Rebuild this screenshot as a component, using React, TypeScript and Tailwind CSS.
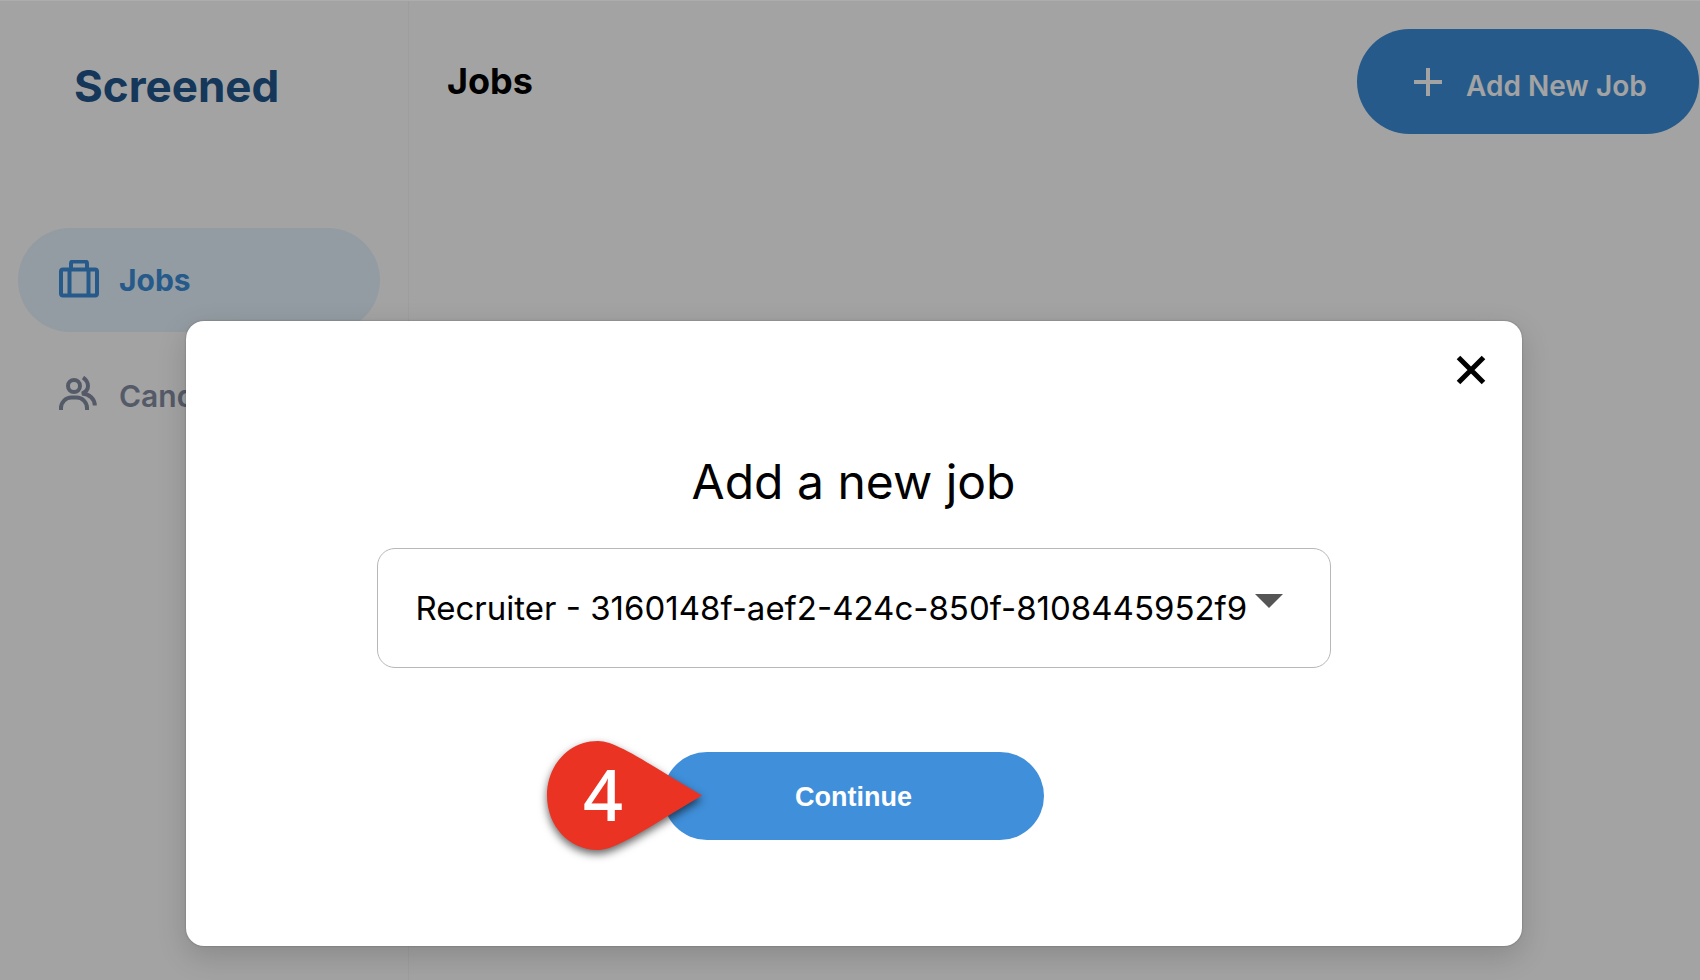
import { useState } from 'react';

const NAV_ITEMS = [
  { label: 'Jobs', icon: <BriefcaseIcon />, active: true },
  { label: 'Candidates', icon: <UsersIcon />, active: false },
];

const JOBS = ['Recruiter - 3160148f-aef2-424c-850f-8108445952f9'];

function BriefcaseIcon() {
  return (
    <svg width="40" height="40" viewBox="0 0 40 40" fill="none" stroke="currentColor" strokeWidth="4" aria-hidden="true">
      <rect x="2" y="9.5" width="36" height="26" rx="2" />
      <path d="M12 9.500V3.500a2 2 0 0 1 2-2h12a2 2 0 0 1 2 2v6M10.500 9.500v26M29.500 9.500v26" />
    </svg>
  );
}

function UsersIcon() {
  return (
    <svg width="40" height="40" viewBox="0 0 40 40" fill="none" stroke="currentColor" strokeWidth="4" aria-hidden="true">
      <circle cx="15" cy="10" r="6" />
      <path d="M2 34v-2a10.500 10.500 0 0 1 10.500-10.500h5A10.500 10.500 0 0 1 28 32v2" />
      <path d="M24 1.500c3 2 5 5 5 8.500s-2 6-6 7.500c7.500.5 12.800 5.500 12.800 12" />
    </svg>
  );
}

export default function App() {
  const [job, setJob] = useState(JOBS[0]);

  return (
    <div className="relative flex min-h-screen overflow-hidden bg-white font-['Inter',sans-serif] text-black">
      {/* Sidebar */}
      <aside className="w-[409px] shrink-0 border-r border-[#f8f8f8] px-[18px] pt-[56px]">
        <a href="#" className="block pl-[56px] text-[44px] leading-[60px] font-bold text-[#21568e]">Screened</a>
        <nav className="mt-[112px] w-[362px] space-y-3">
          {NAV_ITEMS.map(item => (
            <a
              key={item.label}
              href="#"
              className={`flex h-[104px] items-center gap-5 rounded-full pl-[41px] text-[30px] ${item.active ? 'bg-[#e7f5fd] font-bold text-[#3a8ed9]' : 'font-semibold text-[#858ea3]'}`}
            >
              {item.icon}
              {item.label}
            </a>
          ))}
        </nav>
      </aside>

      {/* Header */}
      <main className="flex-1">
        <header className="flex items-start justify-between pt-[29px] pl-[38px]">
          <h1 className="pt-[28px] text-[36px] leading-[48px] font-bold">Jobs</h1>
          <button className="mr-px flex h-[105px] w-[342px] items-center gap-6 rounded-full bg-[#3a8ed9] pl-[57px] text-[28px] font-semibold whitespace-nowrap text-white">
            <svg width="28" height="28" viewBox="0 0 28 28" stroke="currentColor" strokeWidth="4" aria-hidden="true">
              <path d="M14 0v28M0 14h28" />
            </svg>
            <span className="pt-2">Add New Job</span>
          </button>
        </header>
      </main>

      {/* Modal */}
      <div className="absolute inset-0 flex items-start justify-center border-t border-[#adadad] bg-black/[0.36] pt-80 pl-[7px]">
        <div role="dialog" aria-labelledby="modal-title" className="relative flex h-[625px] w-[1336px] flex-col items-center rounded-[18px] bg-white shadow-[0_10px_30px_rgba(0,0,0,0.16),0_0_2px_rgba(0,0,0,0.3)]">
          <button aria-label="Close" className="absolute top-[34px] right-9">
            <svg width="30" height="30" viewBox="0 0 30 30" stroke="currentColor" strokeWidth="5" aria-hidden="true">
              <path d="M2.500 2.500l25 25M27.500 2.500l-25 25" />
            </svg>
          </button>
          <h2 id="modal-title" className="mt-[131px] text-[48px] leading-[60px]">Add a new job</h2>
          <div className="relative mt-9 w-[954px]">
            <select
              aria-label="Job"
              value={job}
              onChange={e => setJob(e.target.value)}
              className="h-[120px] w-full appearance-none rounded-[18px] border border-[#b8b8b8] bg-white pt-0.5 pl-[38px] text-[33px]"
            >
              {JOBS.map(name => <option key={name}>{name}</option>)}
            </select>
            <svg className="pointer-events-none absolute top-[46px] right-12" width="28" height="14" viewBox="0 0 28 14" fill="#555" aria-hidden="true">
              <path d="M0 0h28L14 14z" />
            </svg>
          </div>
          <div className="relative mt-[84px]">
            <button className="h-[88px] w-[381px] rounded-full bg-[#408fda] pt-0.5 font-['Liberation_Sans',sans-serif] text-[27px] font-bold text-white">Continue</button>
            {/* Step marker */}
            <div className="absolute -top-[11px] -left-[118px] flex h-[110px] w-[157px] items-center">
              <svg className="absolute inset-0 overflow-visible drop-shadow-[0_4px_4px_rgba(0,0,0,0.6)]" width="157" height="110" viewBox="0 0 157 110" fill="#ea3323" aria-hidden="true">
                <path d="M53 0C24 0 2 24 2 54.500S24 109 53 109c18 0 46-20 104-54.500C99 20 71 0 53 0z" />
              </svg>
              <span className="relative pb-1 pl-[38px] font-['Noto_Sans',sans-serif] text-[70px] leading-none font-medium text-white">4</span>
            </div>
          </div>
        </div>
      </div>
    </div>
  );
}
